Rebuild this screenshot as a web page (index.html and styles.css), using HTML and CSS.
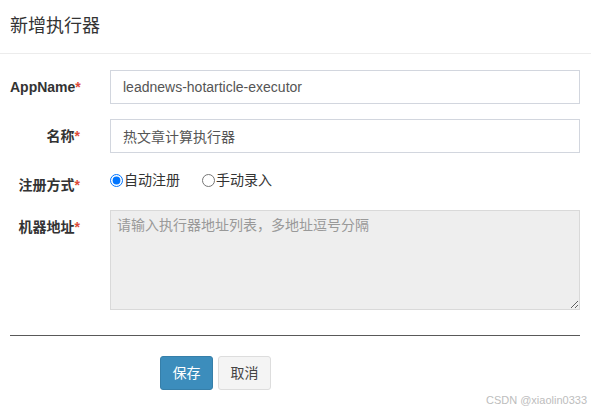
FILE: index.html
```html
<!DOCTYPE html>
<html lang="zh">
<head>
<meta charset="utf-8">
<link rel="stylesheet" href="styles.css">
</head>
<body>
<div class="modal">
  <div class="modal-header">
    <h4 class="modal-title">新增执行器</h4>
  </div>
  <div class="modal-body">
    <form class="form">
      <div class="form-group">
        <label class="control-label">AppName<span class="req">*</span></label>
        <div class="field"><input class="form-control" type="text" value="leadnews-hotarticle-executor"></div>
      </div>
      <div class="form-group">
        <label class="control-label">名称<span class="req">*</span></label>
        <div class="field"><input class="form-control" type="text" value="热文章计算执行器"></div>
      </div>
      <div class="form-group">
        <label class="control-label">注册方式<span class="req">*</span></label>
        <div class="field radios">
          <label class="radio-inline"><input type="radio" name="t" checked>自动注册</label>
          <label class="radio-inline"><input type="radio" name="t">手动录入</label>
        </div>
      </div>
      <div class="form-group">
        <label class="control-label">机器地址<span class="req">*</span></label>
        <div class="field"><textarea class="form-control area" placeholder="请输入执行器地址列表，多地址逗号分隔"></textarea></div>
      </div>
      <hr class="divider">
      <div class="actions">
        <button type="button" class="btn btn-primary">保存</button>
        <button type="button" class="btn btn-default">取消</button>
      </div>
    </form>
  </div>
  <div class="watermark">CSDN @xiaolin0333</div>
</div>
</body>
</html>
```
FILE: styles.css
```css
* { box-sizing: border-box; }
html, body {
  margin: 0;
  padding: 0;
  background: #fff;
}
body {
  font-family: "Liberation Sans", "Noto Sans CJK SC", Arial, sans-serif;
  font-size: 14px;
  color: #333;
  width: 591px;
  height: 412px;
  overflow: hidden;
}
.modal {
  position: relative;
  width: 591px;
  height: 412px;
}
.modal-header {
  height: 54px;
  padding: 14px 10px 0 10px;
  border-bottom: 1px solid #ececec;
}
.modal-title {
  margin: 0;
  font-size: 18px;
  font-weight: normal;
  line-height: 25px;
  color: #333;
}
.modal-body {
  padding: 16px 11px 0 10px;
}
.form-group {
  display: flex;
  margin-bottom: 15px;
}
.control-label {
  width: 100px;
  flex: none;
  text-align: right;
  padding-right: 30px;
  padding-top: 7px;
  line-height: 20px;
  font-weight: bold;
  color: #333;
  font-size: 14px;
}
.req {
  color: #dd4b39;
  font-weight: bold;
}
.field {
  flex: 1;
}
.form-control {
  display: block;
  width: 470px;
  height: 34px;
  padding: 6px 12px;
  border: 1px solid #d2d6de;
  border-radius: 0;
  font-family: "Liberation Sans", "Noto Sans CJK SC", Arial, sans-serif;
  font-size: 14px;
  color: #555;
  background: #fff;
  outline: none;
}
.area {
  height: 100px;
  padding: 4px 6px;
  background: #eeeeee;
  border-color: #d9d9d9;
  resize: both;
  line-height: 20px;
}
.area::placeholder {
  color: #999;
}
.radios {
  display: flex;
  align-items: flex-start;
  padding-top: 2px;
  height: 27px;
}
.radio-inline {
  display: flex;
  align-items: center;
  margin-right: 22px;
  line-height: 20px;
  color: #333;
  font-size: 14px;
}
.radio-inline input {
  margin: 0 1px 0 0;
  width: 13px;
  height: 13px;
}
.divider {
  border: 0;
  border-top: 1px solid #595959;
  margin: 25px 0 20px 0;
  width: 570px;
}
.actions {
  display: flex;
  gap: 5px;
  padding-left: 150px;
}
.btn {
  width: 53px;
  height: 34px;
  padding: 6px 0;
  text-align: center;
  font-family: "Liberation Sans", "Noto Sans CJK SC", Arial, sans-serif;
  font-size: 14px;
  line-height: 20px;
  border-radius: 3px;
  border: 1px solid transparent;
}
.btn-primary {
  background: #3c8dbc;
  border-color: #367fa9;
  color: #fff;
}
.btn-default {
  background: #f4f4f4;
  border-color: #ddd;
  color: #444;
}
.watermark {
  position: absolute;
  right: 4px;
  bottom: 6px;
  font-size: 11px;
  color: #bdbdbd;
  font-family: "Liberation Sans", Arial, sans-serif;
}
```
